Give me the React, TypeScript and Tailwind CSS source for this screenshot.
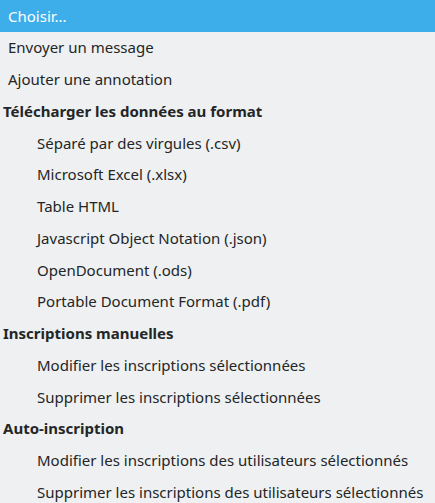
import React from "react";

type Row = { label: string; kind: "selected" | "item" | "group" | "child" };

const rows: Row[] = [
  { label: "Choisir...", kind: "selected" },
  { label: "Envoyer un message", kind: "item" },
  { label: "Ajouter une annotation", kind: "item" },
  { label: "Télécharger les données au format", kind: "group" },
  { label: "Séparé par des virgules (.csv)", kind: "child" },
  { label: "Microsoft Excel (.xlsx)", kind: "child" },
  { label: "Table HTML", kind: "child" },
  { label: "Javascript Object Notation (.json)", kind: "child" },
  { label: "OpenDocument (.ods)", kind: "child" },
  { label: "Portable Document Format (.pdf)", kind: "child" },
  { label: "Inscriptions manuelles", kind: "group" },
  { label: "Modifier les inscriptions sélectionnées", kind: "child" },
  { label: "Supprimer les inscriptions sélectionnées", kind: "child" },
  { label: "Auto-inscription", kind: "group" },
  { label: "Modifier les inscriptions des utilisateurs sélectionnés", kind: "child" },
  { label: "Supprimer les inscriptions des utilisateurs sélectionnés", kind: "child" },
];

export default function App() {
  return (
    <div className="w-[435px] h-[503px] overflow-hidden bg-[#eff0f1] font-['Noto_Sans',sans-serif] text-[15px] text-[#232627]">
      {rows.map((r, i) => {
        if (r.kind === "selected") {
          return (
            <div key={i} className="h-[31.75px] flex items-center pl-[8px] bg-[#3daee9] text-white">
              {r.label}
            </div>
          );
        }
        if (r.kind === "group") {
          return (
            <div key={i} className="h-[31.75px] flex items-center pl-[3px] font-bold">
              {r.label}
            </div>
          );
        }
        return (
          <div
            key={i}
            className={
              "h-[31.75px] flex items-center whitespace-nowrap " +
              (r.kind === "child" ? "pl-[37px]" : "pl-[8px]")
            }
          >
            {r.label}
          </div>
        );
      })}
    </div>
  );
}
